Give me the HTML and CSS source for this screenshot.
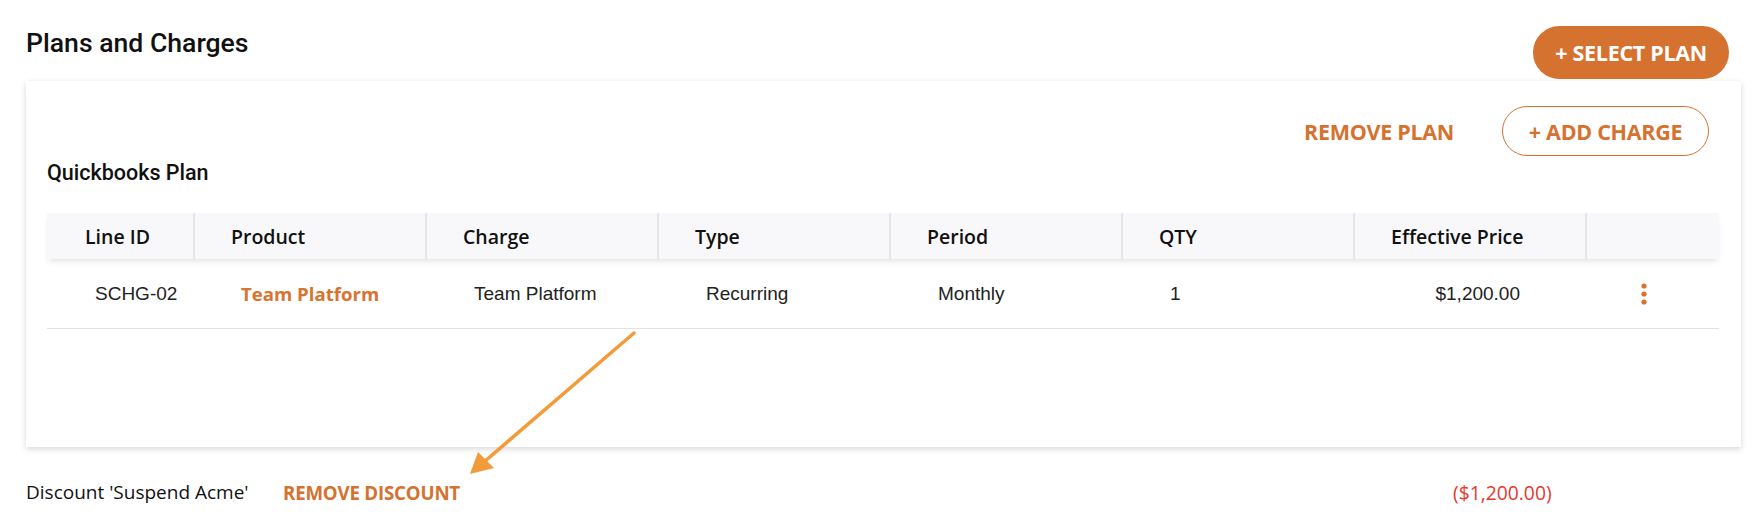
FILE: index.html
```html
<!DOCTYPE html>
<html>
<head>
<meta charset="utf-8">
<link rel="stylesheet" href="styles.css">
</head>
<body>
<div class="page">
  <div class="top">
    <h1 class="title">Plans and Charges</h1>
    <button class="btn-solid">+ SELECT PLAN</button>
  </div>
  <div class="card">
    <div class="card-actions">
      <span class="link-btn">REMOVE PLAN</span>
      <button class="btn-outline">+ ADD CHARGE</button>
    </div>
    <div class="plan-name">Quickbooks Plan</div>
    <div class="table">
      <div class="thead">
        <div class="th">Line ID</div>
        <div class="th">Product</div>
        <div class="th">Charge</div>
        <div class="th">Type</div>
        <div class="th">Period</div>
        <div class="th">QTY</div>
        <div class="th">Effective Price</div>
        <div class="th last"></div>
      </div>
      <div class="trow">
        <div class="td c-id">SCHG-02</div>
        <div class="td c-prod">Team Platform</div>
        <div class="td">Team Platform</div>
        <div class="td">Recurring</div>
        <div class="td">Monthly</div>
        <div class="td">1</div>
        <div class="td c-price">$1,200.00</div>
        <div class="td c-act">
          <svg width="8" height="22" viewBox="0 0 8 22"><circle cx="4" cy="3" r="2.6" fill="#d9722e"/><circle cx="4" cy="11" r="2.6" fill="#d9722e"/><circle cx="4" cy="19" r="2.6" fill="#d9722e"/></svg>
        </div>
      </div>
    </div>
  </div>
  <div class="discount">
    <span class="disc-label">Discount 'Suspend Acme'</span>
    <span class="link-btn disc-remove">REMOVE DISCOUNT</span>
    <span class="disc-amount">($1,200.00)</span>
  </div>
  <svg class="arrow" width="1764" height="524" viewBox="0 0 1764 524">
    <line x1="634" y1="333" x2="484" y2="462" stroke="#f29b3a" stroke-width="3.5" stroke-linecap="round"/>
    <polygon points="470,474 478,452 494,468" fill="#f29b3a"/>
  </svg>
</div>
</body>
</html>
```
FILE: styles.css
```css
* { box-sizing: border-box; }
html, body { margin: 0; padding: 0; background: #fff; }
body { width: 1764px; height: 524px; overflow: hidden; font-family: "Open Sans", "Noto Sans", sans-serif; color: #111; }
.page { position: relative; padding: 0 23px 0 26px; height: 524px; }
.top { display: flex; justify-content: space-between; align-items: flex-start; height: 81px; }
.title { margin: 27px 0 0 0; font-family: Roboto, sans-serif; font-weight: 500; font-size: 26.6px; line-height: 32px; color: #111; }
.btn-solid { margin: 26px 12px 0 0; height: 53px; padding: 0 22px; border: none; border-radius: 27px; background: #d5722f; color: #fff; font-family: "Open Sans", sans-serif; font-weight: 700; font-size: 21.5px; letter-spacing: -0.3px; }
.card { height: 366px; background: #fff; box-shadow: 0 2px 6px rgba(0,0,0,0.16); padding: 0 22px 0 21px; }
.card-actions { display: flex; justify-content: flex-end; align-items: center; gap: 48px; padding: 25px 10px 0 0; }
.link-btn { font-family: "Open Sans", sans-serif; font-weight: 700; font-size: 21.5px; color: #d5722f; letter-spacing: -0.3px; }
.btn-outline { height: 50px; width: 207px; border: 1px solid #d5722f; border-radius: 25px; background: #fff; color: #d5722f; font-family: "Open Sans", sans-serif; font-weight: 700; font-size: 21.5px; letter-spacing: -0.3px; }
.plan-name { margin-top: 4px; font-family: Roboto, sans-serif; font-weight: 500; font-size: 21.5px; line-height: 26px; color: #111; }
.table { margin-top: 27px; }
.thead, .trow { display: grid; grid-template-columns: 148px repeat(6, 232px) 1fr; }
.thead { height: 46px; background: #f8f8fa; box-shadow: 0 4px 6px -2px rgba(0,0,0,0.12); position: relative; z-index: 1; }
.th { display: flex; align-items: center; padding-left: 36px; border-right: 2px solid #e6e6e8; font-family: "Open Sans", sans-serif; font-weight: 600; font-size: 19.5px; color: #111; }
.th:first-child { padding-left: 38px; }
.th.last { border-right: none; }
.trow { height: 70px; border-bottom: 1px solid #e2e2e2; }
.td { display: flex; align-items: center; padding-left: 47px; font-family: "Liberation Sans", Arial, sans-serif; font-size: 19px; color: #222; }
.td.c-id { padding-left: 48px; }
.td.c-prod { font-family: "Open Sans", sans-serif; font-weight: 700; font-size: 18.6px; color: #d97330; padding-left: 46px; }
.td.c-price { justify-content: flex-end; padding-left: 0; padding-right: 67px; }
.td.c-act { padding-left: 53px; }
.discount { display: flex; align-items: center; margin-top: 31px; height: 28px; font-size: 19px; }
.disc-label { width: 257px; font-family: "Open Sans", sans-serif; color: #111; }
.disc-remove { width: 1170px; font-size: 18.7px; letter-spacing: -0.2px; }
.disc-amount { font-family: "Open Sans", sans-serif; color: #e53a2f; font-size: 19.3px; }
.arrow { position: absolute; left: 0; top: 0; pointer-events: none; }
```
